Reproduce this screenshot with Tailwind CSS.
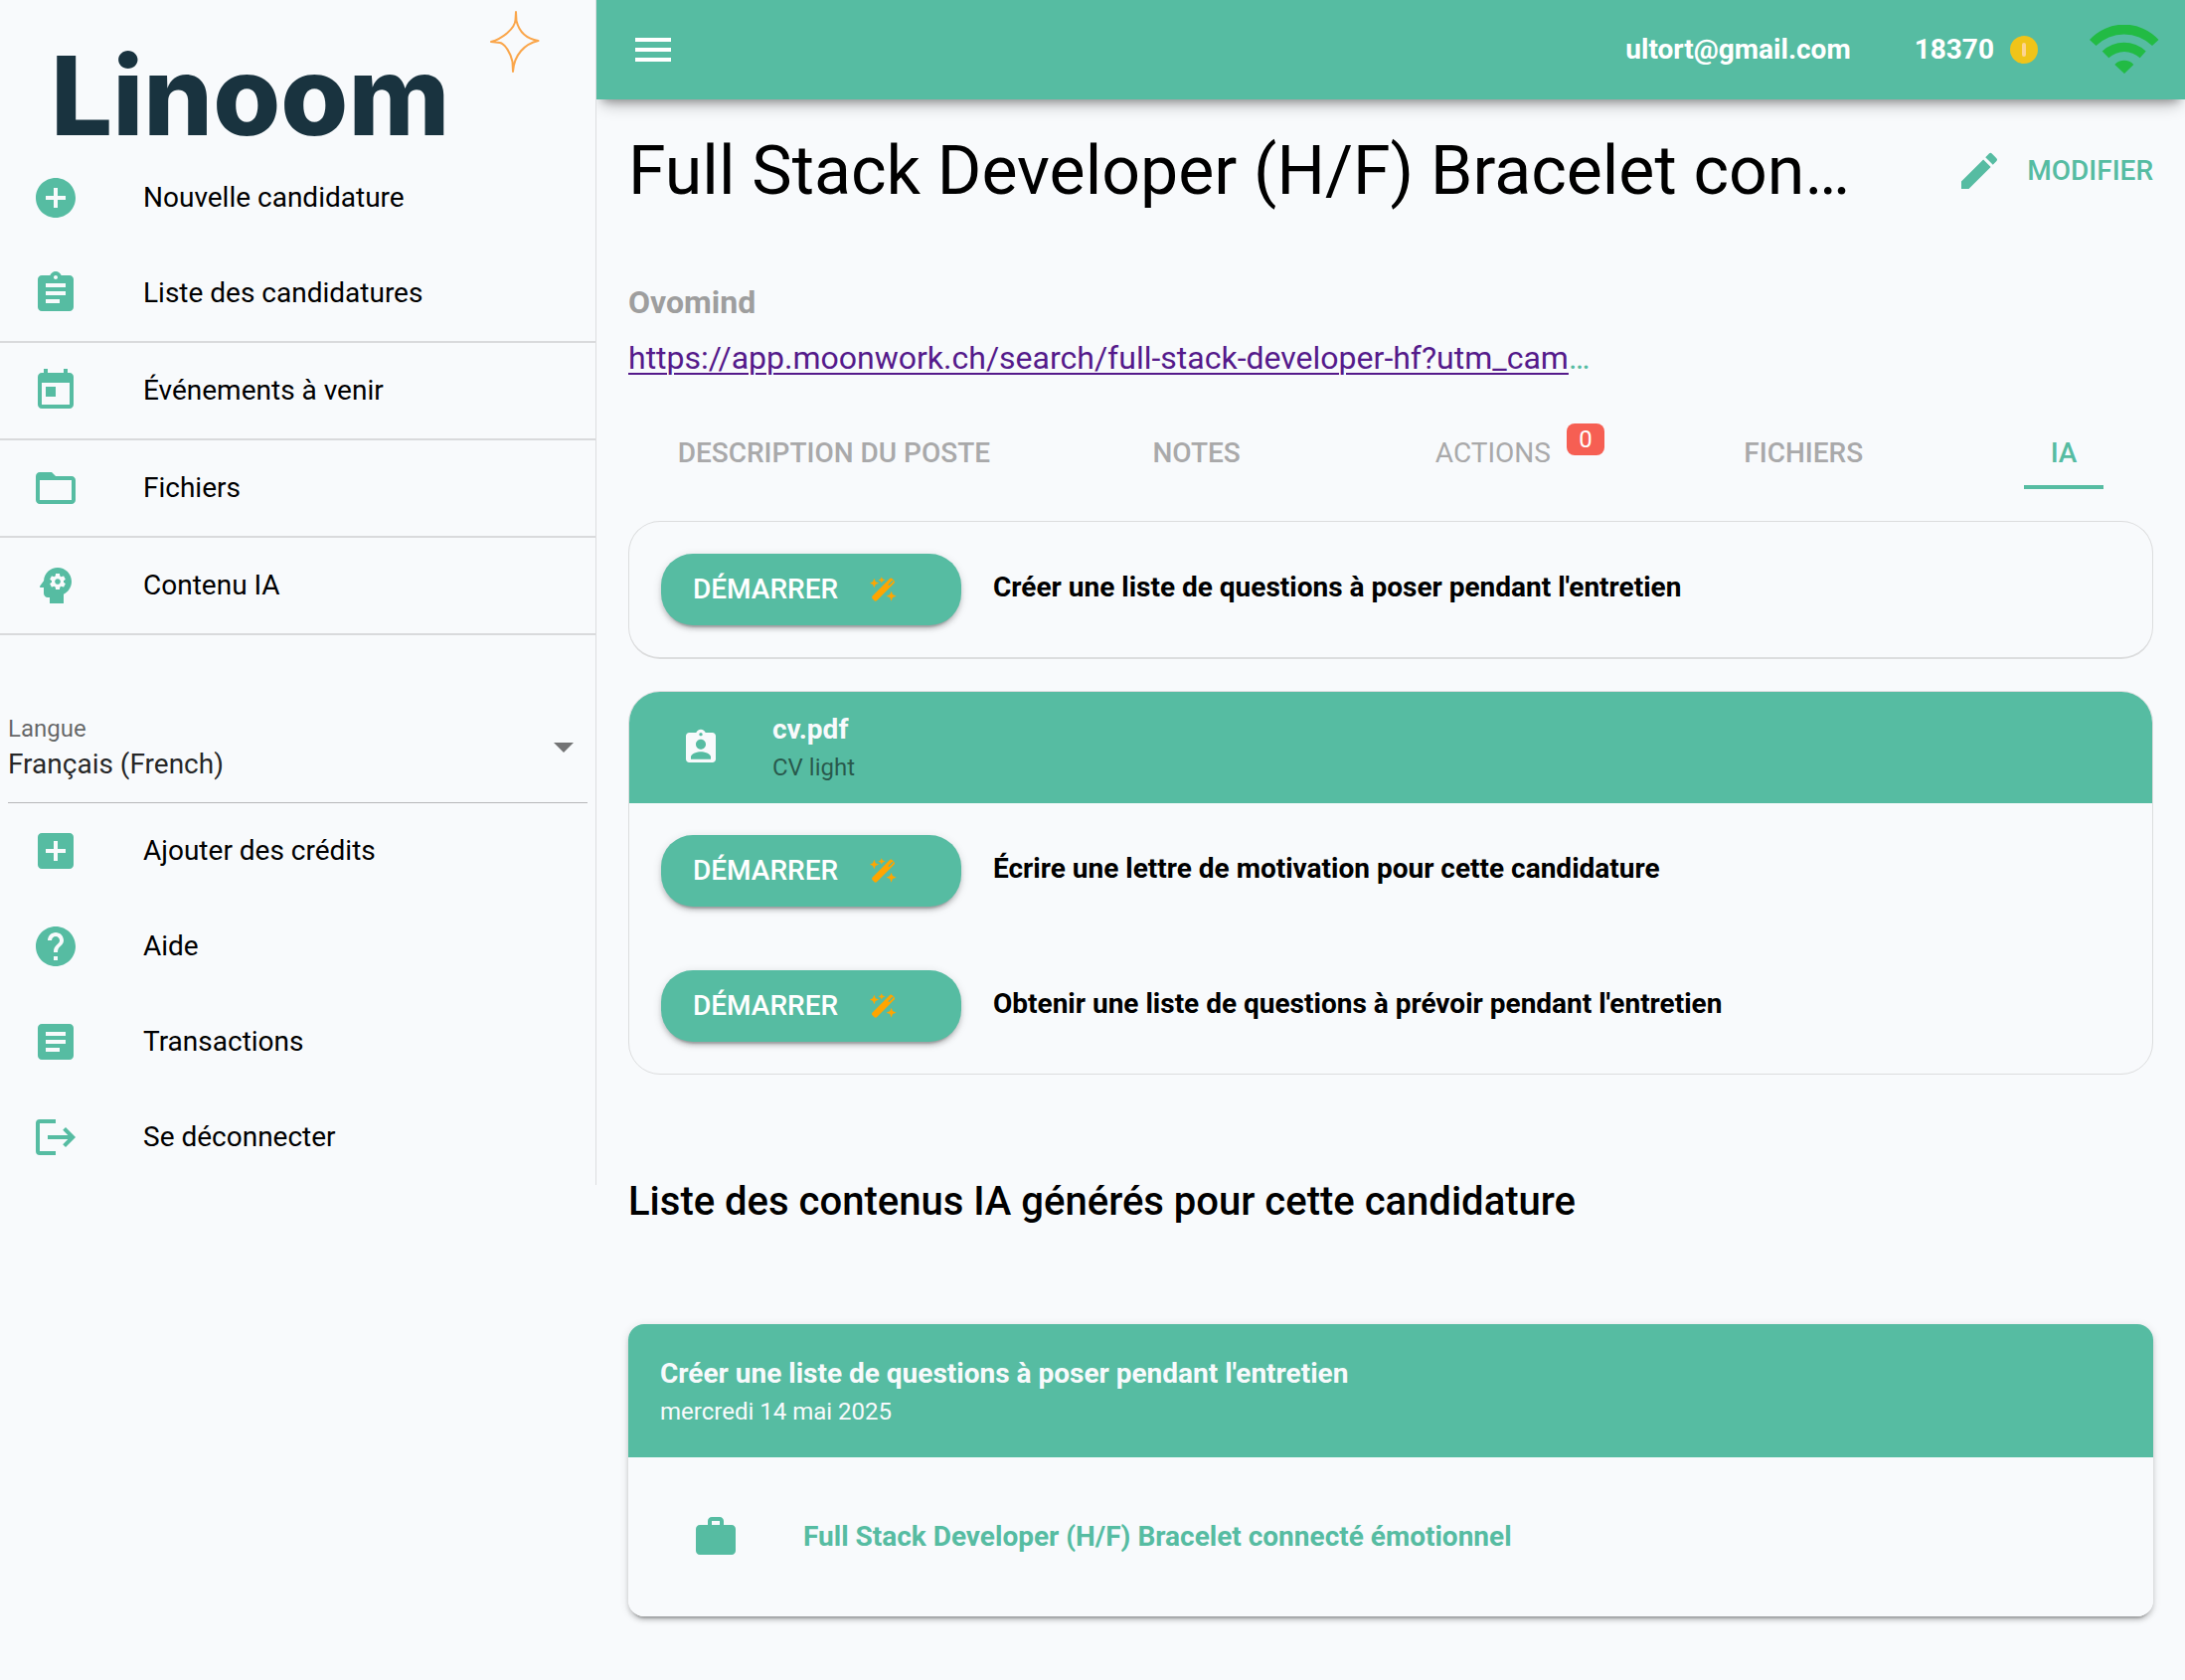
<!DOCTYPE html>
<html lang="fr">
<head>
  <meta charset="utf-8">
  <meta name="viewport" content="width=device-width, initial-scale=1">
  <title>Linoom</title>
  <script src="https://cdn.jsdelivr.net/npm/@tailwindcss/browser@4"></script>
</head>
<body class="bg-[#f8fafc] font-[Roboto,sans-serif] text-[28px] leading-10 text-black">
  <svg class="hidden">
    <symbol id="wand" viewBox="0 0 80 76">
      <rect x="-2" y="29" width="84" height="19" rx="6" transform="rotate(-45 40 38.500)" />
      <path d="M57 24L68 13" stroke="#56bca2" stroke-width="4" stroke-linecap="round" />
      <path d="M13 5L17 15L27 19L17 23L13 33L9 23L0 19L9 15ZM35 0L38 7L46 10L38 13L35 19L32 13L25 10L32 7ZM64 43L68 53L79 58L68 62L64 73L60 62L49 58L60 53Z" />
    </symbol>
  </svg>
  <div class="flex items-start">

    <aside class="relative z-10 w-[600px] shrink-0 border-r border-[#dddee0] bg-[#f8fafc]">
      <a href="/" class="relative block h-[151px] pl-[51px] pt-8 font-[Inter,sans-serif] text-[110px] leading-[128px] font-extrabold text-[#19333f]">Linoom
        <svg class="absolute left-[492px] top-[10px] h-[66px] w-[52px]" viewBox="0 0 52 66" fill="none" stroke="#faa64b" stroke-width="2" stroke-linejoin="round">
          <path d="M27 2L27.500 11C30 21 37 29 49.500 31C36 34 25 45 24 62L23.500 52C22 44 16 34 11 33L2 32C13 29 26 19 26.500 10Z" />
        </svg>
      </a>
      <nav>
        <a href="/new" class="flex h-24 items-center gap-16 px-8">
          <svg class="size-12 fill-[#56bca2]" viewBox="0 0 24 24"><path d="M12 2C6.480 2 2 6.480 2 12s4.480 10 10 10 10-4.480 10-10S17.520 2 12 2zm5 11h-4v4h-2v-4H7v-2h4V7h2v4h4v2z" /></svg>
          Nouvelle candidature
        </a>
        <a href="/list" class="flex h-24 items-center gap-16 px-8">
          <svg class="size-12 fill-[#56bca2]" viewBox="0 0 24 24"><path d="M19 3h-4.180C14.400 1.840 13.300 1 12 1c-1.300 0-2.400.84-2.820 2H5c-1.100 0-2 .9-2 2v14c0 1.100.9 2 2 2h14c1.100 0 2-.9 2-2V5c0-1.100-.9-2-2-2zm-7 0c.55 0 1 .45 1 1s-.45 1-1 1-1-.45-1-1 .45-1 1-1zm2 14H7v-2h7v2zm3-4H7v-2h10v2zm0-4H7V7h10v2z" /></svg>
          Liste des candidatures
        </a>
        <div class="border-y-2 border-[#d9dadc] divide-y-2 divide-[#d9dadc]">
          <a href="/events" class="flex h-[98px] items-center gap-16 px-8">
            <svg class="size-12 fill-[#56bca2]" viewBox="0 0 24 24"><path d="M19 3h-1V1h-2v2H8V1H6v2H5c-1.110 0-1.990.9-1.990 2L3 19c0 1.100.89 2 2 2h14c1.100 0 2-.9 2-2V5c0-1.100-.9-2-2-2zm0 16H5V8h14v11zM7 10h5v5H7z" /></svg>
            Événements à venir
          </a>
          <a href="/files" class="flex h-[98px] items-center gap-16 px-8">
            <svg class="size-12 fill-[#56bca2]" viewBox="0 0 24 24"><path d="M20 6h-8l-2-2H4c-1.100 0-1.990.9-1.990 2L2 18c0 1.100.9 2 2 2h16c1.100 0 2-.9 2-2V8c0-1.100-.9-2-2-2zm0 12H4V8h16v10z" /></svg>
            Fichiers
          </a>
          <a href="/ai" class="flex h-24 items-center gap-16 px-8">
            <svg class="size-12 fill-[#56bca2]" viewBox="0 0 24 24"><path d="M13 8.570c-.79 0-1.430.64-1.430 1.430s.64 1.430 1.430 1.430 1.430-.64 1.430-1.430-.64-1.430-1.430-1.430z" /><path d="M13 3C9.250 3 6.200 5.940 6.020 9.640L4.100 12.200c-.25.33-.01.8.4.8H6v3c0 1.100.9 2 2 2h1v3h7v-4.680c2.360-1.120 4-3.530 4-6.320 0-3.870-3.130-7-7-7zm3 7c0 .13-.01.26-.02.39l.83.66c.08.06.1.16.05.25l-.8 1.390c-.05.09-.16.12-.24.09l-.99-.4c-.21.16-.43.29-.67.39L14 13.830c-.01.1-.1.17-.2.17h-1.600c-.1 0-.18-.07-.2-.17l-.15-1.060c-.25-.1-.47-.23-.68-.39l-.99.4c-.09.03-.2 0-.25-.09l-.8-1.390c-.05-.08-.03-.19.05-.25l.84-.66c-.01-.13-.02-.26-.02-.39s.02-.27.04-.39l-.85-.66c-.08-.06-.1-.16-.05-.26l.8-1.380c.05-.09.15-.12.24-.09l1 .4c.2-.15.43-.29.67-.39L12 6.170c.02-.1.1-.17.2-.17h1.600c.1 0 .18.070.2.170l.15 1.060c.24.1.46.23.67.39l1-.4c.09-.03.2 0 .24.09l.8 1.380c.05.09.03.2-.05.260l-.85.66c.03.12.04.25.04.39z" /></svg>
            Contenu IA
          </a>
        </div>
      </nav>
      <div class="mt-[76px] px-2">
        <div class="relative h-[93px] border-b border-[#b6b7b9]">
          <label for="lang" class="block pt-0.5 text-2xl leading-8 text-black/60">Langue</label>
          <select id="lang" class="block w-full appearance-none bg-transparent leading-10 text-black/87 outline-none">
            <option>Français (French)</option>
            <option>English</option>
          </select>
          <svg class="pointer-events-none absolute right-[14px] top-8 h-[10px] w-5 fill-[#737475]" viewBox="0 0 20 10"><path d="M0 0h20L10 10z" /></svg>
        </div>
      </div>
      <nav>
        <a href="/credits" class="flex h-24 items-center gap-16 px-8">
          <svg class="size-12 fill-[#56bca2]" viewBox="0 0 24 24"><path d="M19 3H5c-1.110 0-2 .9-2 2v14c0 1.100.89 2 2 2h14c1.100 0 2-.9 2-2V5c0-1.100-.9-2-2-2zm-2 10h-4v4h-2v-4H7v-2h4V7h2v4h4v2z" /></svg>
          Ajouter des crédits
        </a>
        <a href="/help" class="flex h-24 items-center gap-16 px-8">
          <svg class="size-12 fill-[#56bca2]" viewBox="0 0 24 24"><path d="M12 2C6.480 2 2 6.480 2 12s4.480 10 10 10 10-4.480 10-10S17.520 2 12 2zm1 17h-2v-2h2v2zm2.070-7.750l-.9.920C13.450 12.900 13 13.500 13 15h-2v-.5c0-1.100.45-2.100 1.170-2.830l1.240-1.260c.37-.36.59-.86.59-1.410 0-1.100-.9-2-2-2s-2 .9-2 2H8c0-2.210 1.790-4 4-4s4 1.790 4 4c0 .88-.36 1.680-.93 2.250z" /></svg>
          Aide
        </a>
        <a href="/transactions" class="flex h-24 items-center gap-16 px-8">
          <svg class="size-12 fill-[#56bca2]" viewBox="0 0 24 24"><path d="M19 3H5c-1.100 0-2 .9-2 2v14c0 1.100.9 2 2 2h14c1.100 0 2-.9 2-2V5c0-1.100-.9-2-2-2zm-5 14H7v-2h7v2zm3-4H7v-2h10v2zm0-4H7V7h10v2z" /></svg>
          Transactions
        </a>
        <a href="/logout" class="flex h-24 items-center gap-16 px-8">
          <svg class="size-12 fill-none stroke-[#56bca2]" viewBox="0 0 24 24" stroke-width="2"><path d="M12 4H4a1 1 0 0 0-1 1v14a1 1 0 0 0 1 1h8M8 12h13M16.300 7.700L20.600 12l-4.300 4.300" /></svg>
          Se déconnecter
        </a>
      </nav>
    </aside>

    <div class="min-w-0 flex-1">
      <header class="flex h-[100px] items-center bg-[#56bca2] pl-[33px] pr-6 font-bold text-white shadow-[0_8px_8px_-6px_rgba(0,0,0,0.25),0_10px_16px_-6px_rgba(0,0,0,0.3)]">
        <button aria-label="Menu" class="mr-auto">
          <svg class="size-12 fill-white" viewBox="0 0 24 24"><path d="M3 18h18v-2H3v2zm0-5h18v-2H3v2zm0-7v2h18V6H3z" /></svg>
        </button>
        <span class="mr-16">ultort@gmail.com</span>
        <span class="mr-4">18370</span>
        <svg class="mr-13 size-7" viewBox="0 0 28 28"><circle cx="14" cy="14" r="14" fill="#f0c419" /><rect x="12" y="7" width="4" height="14" rx="2" fill="#fdd490" /></svg>
        <svg class="h-[50px] w-[72px] fill-[#22bb44]" viewBox="0 0 72 50"><path d="M0 15A47 47 0 0 1 69.500 15L63 21A40.400 40.400 0 0 0 6.500 21ZM12.700 26.500A32 32 0 0 1 56.700 26.500L50.700 33.300A22.700 22.700 0 0 0 19.300 33.300ZM25.300 40A12.600 12.600 0 0 1 44.300 40L35 49Z" /></svg>
      </header>

      <main class="px-8 pb-16">
        <div class="flex h-36 items-center justify-between gap-8">
          <h1 class="text-[68px] leading-[80px]">Full Stack Developer (H/F) Bracelet con…</h1>
          <button class="flex shrink-0 items-center gap-6 font-medium text-[#56bca2]">
            <svg class="size-12 fill-[#56bca2]" viewBox="0 0 24 24"><path d="M3 17.250V21h3.750L17.810 9.940l-3.750-3.750L3 17.250zM20.710 7.040a.996.996 0 0 0 0-1.410l-2.340-2.340a.996.996 0 0 0-1.410 0l-1.830 1.830 3.750 3.750 1.830-1.830z" /></svg>
            MODIFIER
          </button>
        </div>
        <div class="mt-8 text-[32px] leading-14">
          <div class="font-bold text-[#9e9e9e]">Ovomind</div>
          <div class="text-[#56bca2]"><a href="https://app.moonwork.ch/search/full-stack-developer-hf" class="text-[#551a8b] underline decoration-2 underline-offset-4">https://app.moonwork.ch/search/full-stack-developer-hf?utm_cam</a>…</div>
        </div>

        <div class="mt-8 grid h-[72px] grid-cols-[414fr_316fr_281fr_344fr_180fr] justify-items-center font-medium text-[#a9a9aa]">
          <button>DESCRIPTION DU POSTE</button>
          <button>NOTES</button>
          <button class="relative font-normal">ACTIONS
            <span class="absolute left-full top-1.5 ml-4 w-[38px] rounded-lg bg-[#f65f53] text-center text-2xl leading-8 text-white">0</span>
          </button>
          <button>FICHIERS</button>
          <button class="w-20 border-y-4 border-t-transparent border-b-[#56bca2] text-[#56bca2]">IA</button>
        </div>

        <section class="mt-8 flex items-center gap-8 rounded-[32px] border border-b-2 border-[#dcddde] p-8">
          <button class="flex h-[72px] w-[302px] items-center gap-8 rounded-[32px] bg-[#56bca2] px-8 font-medium text-white shadow-[0_6px_2px_-4px_rgba(0,0,0,0.2),0_4px_4px_0_rgba(0,0,0,0.14),0_2px_10px_0_rgba(0,0,0,0.12)]">DÉMARRER
            <svg class="h-[26px] w-[27px] fill-[#ffa500]"><use href="#wand" /></svg>
          </button>
          <p class="pb-1 font-bold">Créer une liste de questions à poser pendant l'entretien</p>
        </section>

        <section class="mt-8 overflow-hidden rounded-[32px] border border-[#dcddde]">
          <div class="flex h-28 items-center gap-13 bg-[#56bca2] pl-[52px]">
            <svg class="size-10 fill-[#f8fafc]" viewBox="0 0 24 24"><path d="M19 3h-4.180C14.400 1.840 13.300 1 12 1c-1.300 0-2.400.84-2.820 2H5c-1.100 0-2 .9-2 2v14c0 1.100.9 2 2 2h14c1.100 0 2-.9 2-2V5c0-1.100-.9-2-2-2zm-7 0c.55 0 1 .45 1 1s-.45 1-1 1-1-.45-1-1 .45-1 1-1zm0 4c1.660 0 3 1.340 3 3s-1.340 3-3 3-3-1.340-3-3 1.340-3 3-3zm6 12H6v-1.400c0-2 4-3.100 6-3.100s6 1.100 6 3.100V19z" /></svg>
            <div>
              <div class="font-bold text-[#f8fafc]">cv.pdf</div>
              <div class="text-2xl leading-9 text-black/54">CV light</div>
            </div>
          </div>
          <div class="space-y-16 p-8">
            <div class="flex items-center gap-8">
              <button class="flex h-[72px] w-[302px] items-center gap-8 rounded-[32px] bg-[#56bca2] px-8 font-medium text-white shadow-[0_6px_2px_-4px_rgba(0,0,0,0.2),0_4px_4px_0_rgba(0,0,0,0.14),0_2px_10px_0_rgba(0,0,0,0.12)]">DÉMARRER
                <svg class="h-[26px] w-[27px] fill-[#ffa500]"><use href="#wand" /></svg>
              </button>
              <p class="pb-1 font-bold">Écrire une lettre de motivation pour cette candidature</p>
            </div>
            <div class="flex items-center gap-8">
              <button class="flex h-[72px] w-[302px] items-center gap-8 rounded-[32px] bg-[#56bca2] px-8 font-medium text-white shadow-[0_6px_2px_-4px_rgba(0,0,0,0.2),0_4px_4px_0_rgba(0,0,0,0.14),0_2px_10px_0_rgba(0,0,0,0.12)]">DÉMARRER
                <svg class="h-[26px] w-[27px] fill-[#ffa500]"><use href="#wand" /></svg>
              </button>
              <p class="pb-1 font-bold">Obtenir une liste de questions à prévoir pendant l'entretien</p>
            </div>
          </div>
        </section>

        <h2 class="mt-24 text-[40px] leading-16 font-medium">Liste des contenus IA générés pour cette candidature</h2>

        <section class="mt-[91px] overflow-hidden rounded-2xl shadow-[0_6px_2px_-4px_rgba(0,0,0,0.2),0_4px_4px_0_rgba(0,0,0,0.14),0_2px_10px_0_rgba(0,0,0,0.12)]">
          <div class="h-[134px] bg-[#56bca2] px-8 pt-[30px] text-[#f8fafc]">
            <div class="font-bold">Créer une liste de questions à poser pendant l'entretien</div>
            <div class="text-2xl leading-9">mercredi 14 mai 2025</div>
          </div>
          <a href="/job" class="flex h-40 items-center gap-16 bg-[#f8fafc] px-16 font-bold text-[#56bca2]">
            <svg class="size-12 fill-[#56bca2]" viewBox="0 0 24 24"><path d="M20 6h-4V4c0-1.110-.89-2-2-2h-4c-1.110 0-2 .89-2 2v2H4c-1.110 0-1.990.89-1.990 2L2 19c0 1.110.89 2 2 2h16c1.110 0 2-.89 2-2V8c0-1.110-.89-2-2-2zm-6 0h-4V4h4v2z" /></svg>
            Full Stack Developer (H/F) Bracelet connecté émotionnel
          </a>
        </section>
      </main>
    </div>
  </div>
</body>
</html>
